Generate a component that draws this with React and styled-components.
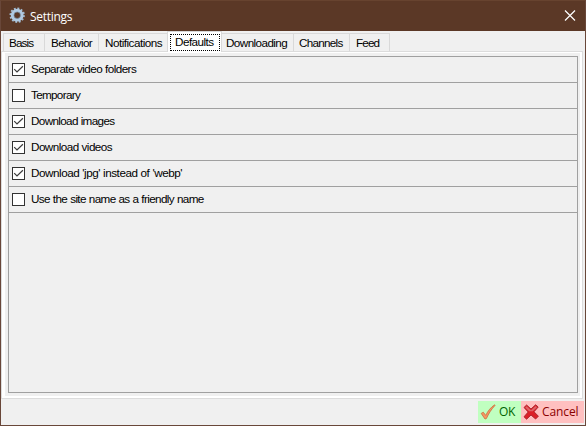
import React from "react";
import styled, { createGlobalStyle } from "styled-components";

const Global = createGlobalStyle`
  * { box-sizing: border-box; }
  body { margin: 0; overflow: hidden; }
`;

const Window = styled.div`
  width: 586px;
  height: 426px;
  display: flex;
  flex-direction: column;
  background: #f0f0f0;
  border: 1px solid #694739;
  border-top-color: #67432f;
  color: #000;
  font-family: "Liberation Sans", Arial, sans-serif;
`;

const TitleBar = styled.header`
  height: 30px;
  flex: none;
  display: flex;
  align-items: center;
  padding: 0 9px 0 7px;
  background: #5b3826;
  color: #fff;
`;

const Title = styled.h1`
  flex: 1;
  margin: 0 0 0 4px;
  padding-top: 1px;
  font: 400 12px/16px "Open Sans", "Noto Sans", sans-serif;
  letter-spacing: ${(p) => p.$spacing}px;
`;

const CloseButton = styled.button`
  display: flex;
  padding: 0;
  border: 0;
  background: none;
`;

const TabStrip = styled.nav`
  height: 20px;
  flex: none;
  display: flex;
  padding: 2px 0 0 2px;
`;

const Tab = styled.button`
  width: ${(p) => p.$width}px;
  height: 18px;
  flex: none;
  padding: 0 0 0 ${(p) => p.$inset}px;
  border: solid #d9d9d9;
  border-width: 1px 1px 0 0;
  background: #f0f0f0;
  color: #000;
  font: 11.7px/14px "Liberation Sans", Arial, sans-serif;
  letter-spacing: ${(p) => p.$spacing}px;
  text-align: left;
  white-space: nowrap;

  &:first-child { border-left-width: 1px; }
`;

const ActiveTab = styled(Tab)`
  z-index: 1;
  height: 21px;
  margin: -2px 0 0 -2px;
  padding: 2px 1px 1px 2px;
  border-width: 1px 1px 0;
  background: #fff;
`;

const FocusFrame = styled.span`
  display: block;
  height: 17px;
  padding: 0 0 0 ${(p) => p.$inset}px;
  border: 1px dotted #000;
  line-height: 13px;
`;

const Pane = styled.main`
  width: 582px;
  height: 348px;
  flex: none;
  border: 1px solid #dcdcdc;
  background: #fff;
  padding: 1px 2px 2px 3px;
`;

const PaneBody = styled.div`
  height: 100%;
  padding: 3px 2px 3px 3px;
  background: #f0f0f0;
`;

const OptionList = styled.div`
  height: 100%;
  border: 1px solid #a0a0a0;
`;

const Option = styled.label`
  height: 26px;
  display: flex;
  align-items: center;
  gap: 6px;
  padding-left: 3px;
  border-bottom: 1px solid #a0a0a0;
  font-size: 11.7px;
  line-height: 14px;
  letter-spacing: ${(p) => p.$spacing}px;
  word-spacing: 0.3px;
  white-space: nowrap;
`;

const OptionText = styled.span`
  padding-bottom: 1px;
`;

const CheckBox = styled.span`
  width: 13px;
  height: 13px;
  display: flex;
  flex: none;
  border: 1px solid #333;
  background: #fff;
`;

const Footer = styled.footer`
  flex: 1;
  display: flex;
  justify-content: flex-end;
  padding: 2px 1px 2px 0;
`;

const ActionButton = styled.button`
  width: ${(p) => p.$width}px;
  height: 22px;
  display: flex;
  align-items: center;
  gap: ${(p) => p.$gap}px;
  padding: 0 0 0 2px;
  border: 0;
  background: ${(p) => p.$bg};
  color: ${(p) => p.$color};
  font: 12px/16px "Open Sans", "Noto Sans", sans-serif;
  letter-spacing: ${(p) => p.$spacing}px;
`;

const GearIcon = () => (
  <svg width="18" height="18" viewBox="0 0 18 18">
    <circle cx="9.2" cy="8.2" r="6.8" fill="none" stroke="#a5bdd3" strokeWidth="1.8" strokeDasharray="1.9 1.66" />
    <circle cx="9.2" cy="8.2" r="4.8" fill="none" stroke="#b0cae2" strokeWidth="3.2" />
    <circle cx="9.2" cy="8.2" r="3.3" fill="none" stroke="#7b8fa3" strokeWidth=".7" />
  </svg>
);

const CloseIcon = () => (
  <svg width="12" height="12" viewBox="0 0 12 12">
    <path d="M1 .5 11 10.5M11 .5 1 10.5" stroke="#fff" strokeWidth="1.2" />
  </svg>
);

const CheckMark = () => (
  <svg width="11" height="11" viewBox="0 0 11 11">
    <path d="M1.2 5.2 4 8 9.9 2.3" fill="none" stroke="#3c3c3c" strokeWidth="1.2" />
  </svg>
);

const OkIcon = () => (
  <svg width="16" height="16" viewBox="0 0 16 16">
    <path d="M1.2 9.4 3.3 8.2 5.7 11.4C8 6.8 11 3 14.7.8L15 1.4C11.4 5.2 8.6 9.6 6.4 14.6L5 15Z" fill="#f79663" stroke="#c96f3c" strokeWidth=".8" />
  </svg>
);

const CancelIcon = () => (
  <svg width="16" height="16" viewBox="0 0 16 16">
    <path d="M1 3.5 3.6 1 8 5 12.6.8 15.2 3 11 7.8 15.4 12.2 12.6 15 8 11 3.6 15.2 1 12.8 5.2 8Z" fill="#dc2028" stroke="#a82028" strokeWidth=".9" strokeLinejoin="round" />
    <path d="M2.2 3.6 3.7 2.2 8 6.2 12.6 2.1 14 3.2 9.8 7.2H6Z" fill="#df6569" />
  </svg>
);

const tabs = [
  { label: "Basis", width: 42, inset: 5, spacing: -0.85 },
  { label: "Behavior", width: 54, inset: 6, spacing: -0.63 },
  { label: "Notifications", width: 70, inset: 6, spacing: -0.51 },
  { label: "Defaults", width: 55, inset: 4, spacing: -0.53, active: true },
  { label: "Downloading", width: 72, inset: 4, spacing: -0.58 },
  { label: "Channels", width: 56, inset: 5, spacing: -0.72 },
  { label: "Feed", width: 40, inset: 6, spacing: -0.85 },
];

const options = [
  { label: "Separate video folders", checked: true, spacing: -0.56 },
  { label: "Temporary", checked: false, spacing: -0.68 },
  { label: "Download images", checked: true, spacing: -0.65 },
  { label: "Download videos", checked: true, spacing: -0.55 },
  { label: "Download 'jpg' instead of 'webp'", checked: true, spacing: -0.47 },
  { label: "Use the site name as a friendly name", checked: false, spacing: -0.62 },
];

export default function App() {
  return (
    <>
      <Global />
      <Window>
        <TitleBar>
          <GearIcon />
          <Title $spacing={-0.3}>Settings</Title>
          <CloseButton aria-label="Close"><CloseIcon /></CloseButton>
        </TitleBar>
        <TabStrip>
          {tabs.map((t) =>
            t.active ? (
              <ActiveTab key={t.label} $width={t.width} $spacing={t.spacing}>
                <FocusFrame $inset={t.inset}>{t.label}</FocusFrame>
              </ActiveTab>
            ) : (
              <Tab key={t.label} $width={t.width} $inset={t.inset} $spacing={t.spacing}>{t.label}</Tab>
            )
          )}
        </TabStrip>
        <Pane>
          <PaneBody>
            <OptionList>
              {options.map((o) => (
                <Option key={o.label} $spacing={o.spacing}>
                  <CheckBox>{o.checked && <CheckMark />}</CheckBox>
                  <OptionText>{o.label}</OptionText>
                </Option>
              ))}
            </OptionList>
          </PaneBody>
        </Pane>
        <Footer>
          <ActionButton $width={43} $gap={3} $bg="#c0ffc0" $color="#006400" $spacing={-0.3}><OkIcon />OK</ActionButton>
          <ActionButton $width={63} $gap={3} $bg="#ffc0c0" $color="#8b0000" $spacing={-0.1}><CancelIcon />Cancel</ActionButton>
        </Footer>
      </Window>
    </>
  );
}
